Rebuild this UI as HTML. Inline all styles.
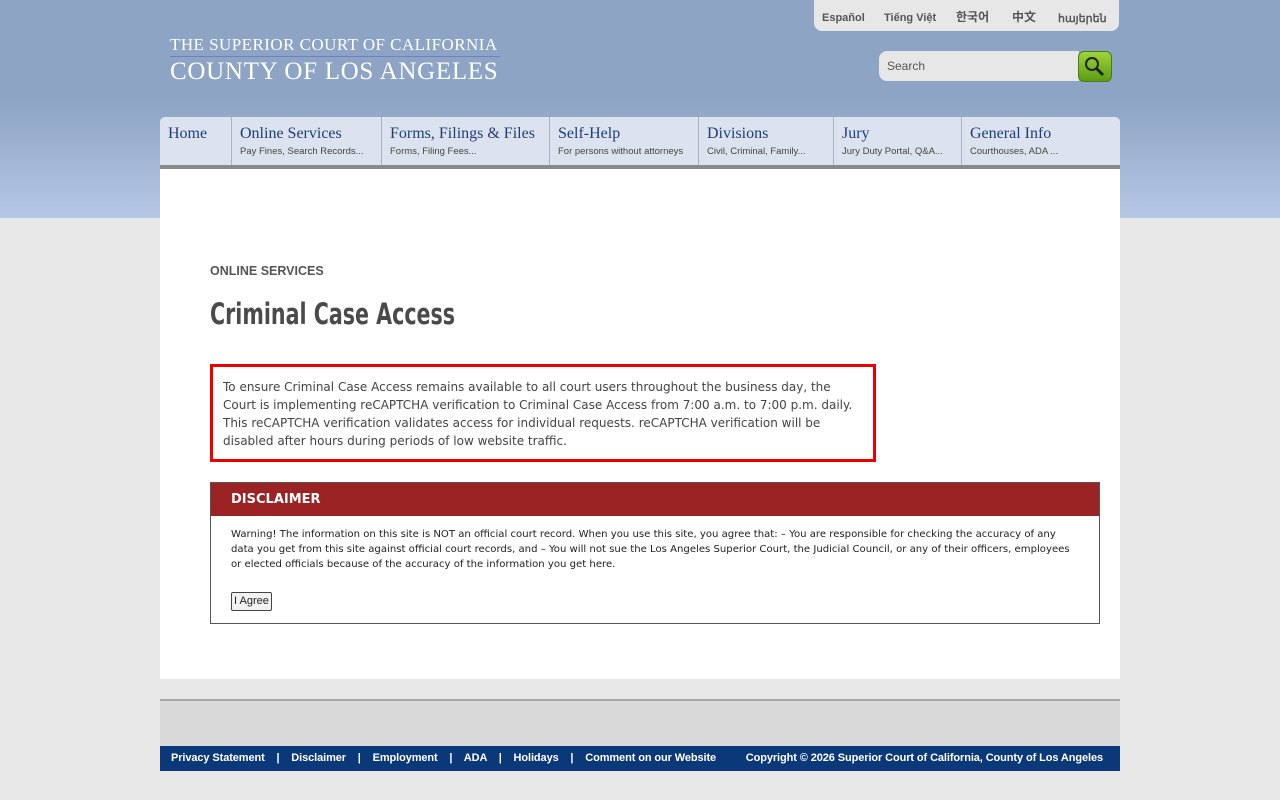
<!DOCTYPE html>
<html><head><style>
*{margin:0;padding:0;box-sizing:border-box}
body{width:1280px;height:800px;background:#e8e8e8;font-family:"Liberation Sans",sans-serif;position:relative;overflow:hidden}
.hdr{position:absolute;left:0;top:0;width:1280px;height:218px;background:linear-gradient(#8ea4c4 0,#8ea4c4 100px,#b4c8e6 218px)}
.lang{position:absolute;left:814px;top:0;width:305px;height:31px;background:#e7e7e7;border-radius:0 0 8px 8px;font-size:11px;font-weight:bold;color:#555}
.lang span{position:absolute;top:12px}
.logo1{position:absolute;left:170px;top:35px;font-family:"Liberation Serif",serif;font-size:17px;color:#fff;letter-spacing:.45px}
.logoline{position:absolute;left:170px;top:56px;width:330px;height:1px;background:#6f7fc9}
.logo2{position:absolute;left:170px;top:58px;font-family:"Liberation Serif",serif;font-size:25px;color:#fff;letter-spacing:.7px}
.search{position:absolute;left:879px;top:51px;width:200px;height:30px;background:#e7e7e7;border-radius:8px 0 0 8px;font-size:12px;color:#555;padding:8px 8px}
.sbtn{position:absolute;left:1078px;top:51px;width:34px;height:31px;background:linear-gradient(#9fd43a,#5a9d14);border-radius:6px;border:1px solid #4b7c14}
.nav{position:absolute;left:160px;top:117px;width:960px;background:#dde3ee;border-radius:5px 5px 0 0;border-bottom:4px solid #8a8a8a;height:52px}
.nav div{position:absolute;top:0;height:48px;border-right:1px solid #a9b2c0;padding:7px 8px}
.nav b{display:block;font-family:"Liberation Serif",serif;font-weight:normal;font-size:16px;color:#1e3d7a;margin-top:1px}
.nav i{display:block;font-style:normal;font-size:9.5px;color:#444;margin-top:3px;white-space:nowrap}
.main{position:absolute;left:160px;top:169px;width:960px;height:510px;background:#fff}
.kick{position:absolute;left:50px;top:95px;font-size:12.5px;font-weight:bold;color:#555}
h1{position:absolute;left:50px;top:128px;font-size:29px;color:#4a4a4a;font-family:"DejaVu Sans Condensed","Liberation Sans",sans-serif;font-weight:bold;transform:scaleX(.79);transform-origin:left top;white-space:nowrap}
.notice{position:absolute;left:50px;top:195px;width:666px;height:98px;border:3px solid #e00;padding:11px 10px;font-family:"DejaVu Sans",sans-serif;font-size:12px;line-height:18px;color:#444}
.disc{position:absolute;left:50px;top:313px;width:890px;height:142px;border:1px solid #555}
.dh{height:33px;background:#9b2323;color:#fff;font-weight:bold;padding:9px 20px;font-family:"DejaVu Sans",sans-serif;font-size:13px}
.db{padding:11px 20px 0;font-family:"DejaVu Sans",sans-serif;font-size:10.1px;line-height:15px;color:#222}
.btn{display:inline-block;margin-top:20px;border:1px solid #444;border-radius:2px;padding:1px 2px;font-size:11px;background:#f2f2f2;font-family:"Liberation Sans",sans-serif}
.fgray{position:absolute;left:160px;top:699px;width:960px;height:47px;background:#d9d9d9;border-top:2px solid #a8a8a8}
.fbar{position:absolute;left:160px;top:746px;width:960px;height:25px;background:#0b3878;color:#fff;font-size:11px;font-weight:bold}
.fbar span{position:absolute;top:6px;letter-spacing:-.1px}
</style></head><body>
<div class="hdr"></div>
<div class="lang"><span style="left:8px">Español</span><span style="left:70px">Tiếng Việt</span><span style="left:142px;font-family:'Noto Sans CJK KR',sans-serif;top:8px;font-size:12px">한국어</span><span style="left:198px;font-family:'Noto Sans CJK SC',sans-serif;top:8px;font-size:12px">中文</span><span style="left:244px">հայերեն</span></div>
<div class="logo1">THE SUPERIOR COURT OF CALIFORNIA</div>
<div class="logoline"></div>
<div class="logo2">COUNTY OF LOS ANGELES</div>
<div class="search">Search</div>
<div class="sbtn"><svg width="32" height="29" viewBox="0 0 32 29"><circle cx="13" cy="12" r="6" fill="none" stroke="#222" stroke-width="2"/><path d="M17 16l7 7" stroke="#222" stroke-width="3"/></svg></div>
<div class="nav">
<div style="left:0;width:72px"><b>Home</b></div>
<div style="left:72px;width:150px"><b>Online Services</b><i>Pay Fines, Search Records...</i></div>
<div style="left:222px;width:168px"><b>Forms, Filings &amp; Files</b><i>Forms, Filing Fees...</i></div>
<div style="left:390px;width:149px"><b>Self-Help</b><i>For persons without attorneys</i></div>
<div style="left:539px;width:135px"><b>Divisions</b><i>Civil, Criminal, Family...</i></div>
<div style="left:674px;width:128px"><b>Jury</b><i>Jury Duty Portal, Q&amp;A...</i></div>
<div style="left:802px;width:158px;border:none"><b>General Info</b><i>Courthouses, ADA ...</i></div>
</div>
<div class="main">
<div class="kick">ONLINE SERVICES</div>
<h1>Criminal Case Access</h1>
<div class="notice">To ensure Criminal Case Access remains available to all court users throughout the business day, the Court is implementing reCAPTCHA verification to Criminal Case Access from 7:00 a.m. to 7:00 p.m. daily. This reCAPTCHA verification validates access for individual requests. reCAPTCHA verification will be disabled after hours during periods of low website traffic.</div>
<div class="disc"><div class="dh">DISCLAIMER</div><div class="db">Warning! The information on this site is NOT an official court record. When you use this site, you agree that: – You are responsible for checking the accuracy of any data you get from this site against official court records, and – You will not sue the Los Angeles Superior Court, the Judicial Council, or any of their officers, employees or elected officials because of the accuracy of the information you get here.<br><span class="btn">I Agree</span></div></div>
</div>
<div class="fgray"></div>
<div class="fbar"><span style="left:11px">Privacy Statement &nbsp;&nbsp; | &nbsp;&nbsp; Disclaimer &nbsp;&nbsp; | &nbsp;&nbsp; Employment &nbsp;&nbsp; | &nbsp;&nbsp; ADA &nbsp;&nbsp; | &nbsp;&nbsp; Holidays &nbsp;&nbsp; | &nbsp;&nbsp; Comment on our Website</span><span style="right:17px">Copyright © 2026 Superior Court of California, County of Los Angeles</span></div>
</body></html>
